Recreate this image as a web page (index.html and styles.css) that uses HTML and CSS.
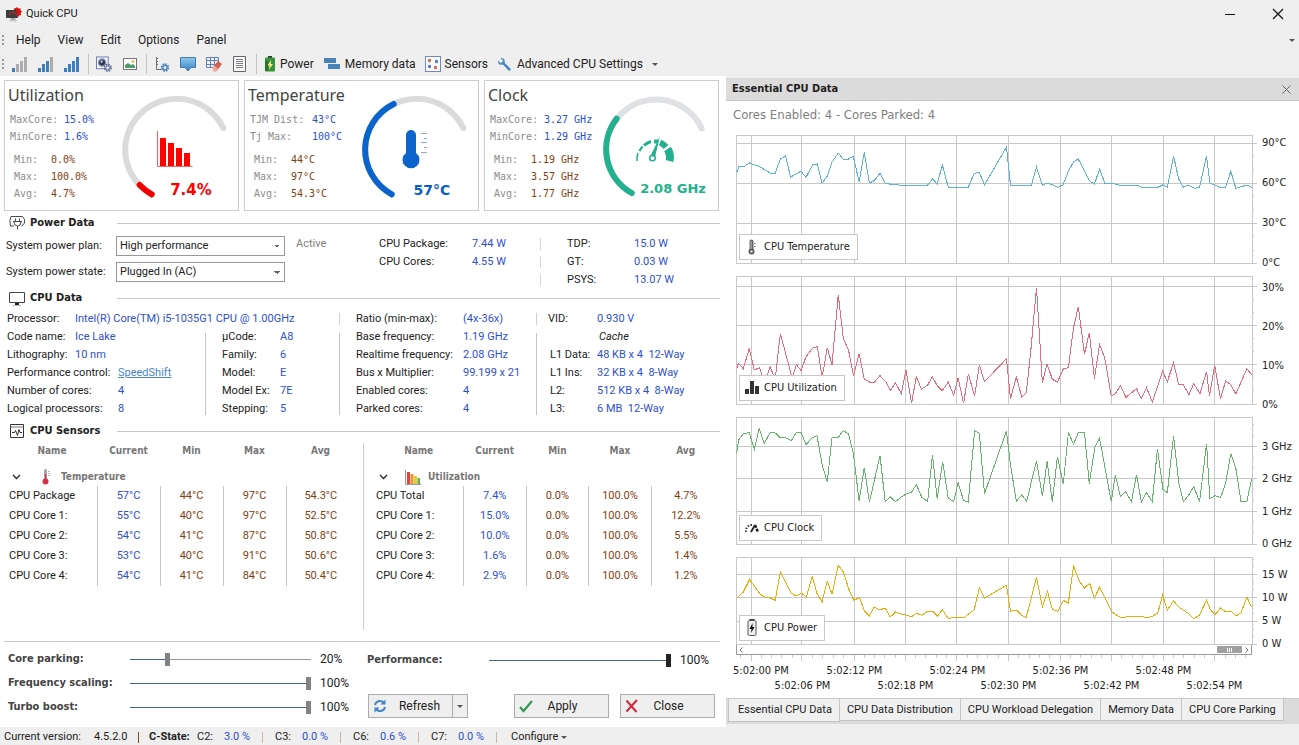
FILE: index.html
```html
<!DOCTYPE html>
<html lang="en">
<head>
<meta charset="utf-8">
<title>Quick CPU</title>
<link rel="stylesheet" href="styles.css">
</head>
<body>
<div class="app">
  <header class="titlebar">
    <svg class="app-icon" width="16" height="15" viewBox="0 0 16 15"><path d="M8 1.500l2-.5 1-1 1.500 1.500 2-.3v2l1.500 1.300-1.300 1.500.5 2-2 .5-1 1.500-5-3z" fill="#d81414"/><path d="M0 3h10l2 8H1a1 1 0 0 1-1-1z" fill="#3d3d40"/><path d="M3.500 8.500a3.500 3.500 0 0 1 7-.3M6.500 8l2-2.500" fill="none" stroke="#a33" stroke-width="1"/><path d="M5 11h4l1 2.500H4z" fill="#a9a9ad"/><path d="M3 14h8" stroke="#c9c9cc"/></svg>
    <span class="title-text">Quick CPU</span>
    <button class="win-btn" aria-label="Minimize"><svg width="12" height="12" viewBox="0 0 12 12"><path d="M1 6.500h10" stroke="#111"/></svg></button>
    <button class="win-btn" aria-label="Close window"><svg width="12" height="12" viewBox="0 0 12 12"><path d="M1 1l10 10M11 1L1 11" stroke="#111" stroke-width="1.200"/></svg></button>
  </header>
  <nav class="menubar">
    <i class="grip"></i>
    <button>Help</button><button>View</button><button>Edit</button><button>Options</button><button>Panel</button>
    <i class="caret end"></i>
  </nav>
  <div class="toolbar">
    <i class="grip"></i>
    <button aria-label="Low"><svg width="16" height="16"><path d="M0 12h3v4H0z" fill="#3f7fc0"/><path d="M4 8h3v8H4zM8 5h3v11H8zM12 1h3v15h-3z" fill="#adadb0"/></svg></button>
    <button aria-label="Medium"><svg width="16" height="16"><path d="M0 12h3v4H0zM4 8h3v8H4zM8 5h3v11H8z" fill="#3f7fc0"/><path d="M12 1h3v15h-3z" fill="#adadb0"/></svg></button>
    <button aria-label="High"><svg width="16" height="16"><path d="M0 12h3v4H0zM4 8h3v8H4zM8 5h3v11H8zM12 1h3v15h-3z" fill="#3f7fc0"/></svg></button>
    <i class="tb-sep"></i>
    <button aria-label="View settings"><svg width="16" height="16" viewBox="0 0 17 17"><rect x=".5" y="1" width="12.500" height="12.500" fill="#f5f7ff" stroke="#6679ad"/><circle cx="6.500" cy="7" r="3.800" fill="#334" stroke="#8090b8" stroke-width="1.500"/><circle cx="6" cy="6" r="1.200" fill="#cfd8f5"/><circle cx="12.500" cy="12.500" r="3.400" fill="none" stroke="#5c6890" stroke-width="1.800" stroke-dasharray="1.700 .97"/><circle cx="12.500" cy="12.500" r="2" fill="#eef" stroke="#5c6890"/></svg></button>
    <button aria-label="Image"><svg width="16" height="16" viewBox="0 0 16 16"><rect x="1.500" y="2.500" width="13" height="11" fill="#fff" stroke="#77777a"/><circle cx="11" cy="5.500" r="1.300" fill="#e5ae3a"/><path d="M3 12V9l3-2 3 2 2-1 2 2v2z" fill="#4d9a6b"/></svg></button>
    <i class="tb-sep"></i>
    <button aria-label="Axis settings"><svg width="16" height="16" viewBox="0 0 16 16"><path d="M2.500 1v12.500H7M2 2.500h2M2 5.500h2M2 8.500h2" fill="none" stroke="#707074"/><circle cx="11" cy="11.500" r="3.300" fill="none" stroke="#4a85c0" stroke-width="2" stroke-dasharray="1.600 .95"/><circle cx="11" cy="11.500" r="2.200" fill="none" stroke="#4a85c0" stroke-width="1.300"/></svg></button>
    <button aria-label="Comment"><svg width="16" height="16" viewBox="0 0 16 16"><defs><linearGradient id="cm" x2="0" y2="1"><stop stop-color="#8fc7ee"/><stop offset="1" stop-color="#3a83c2"/></linearGradient></defs><path d="M.5 1.500h15v10h-4.500l-3 3.500-3-3.500H.5z" fill="url(#cm)" stroke="#3f7bb0"/></svg></button>
    <button aria-label="Clear grid"><svg width="16" height="16" viewBox="0 0 16 16"><path d="M.5 1.500h12v10H.5zM.5 4.500h12M.5 8.500h12M4.500 1.500v10M8.500 1.500v10" fill="#eef3ff" stroke="#637fbb"/><path d="M7 11l5-6 4 3-5 6.500-3 .5z" fill="#d2604a"/><path d="M6 12l2-2.500 4 3L10 15.500H7.500z" fill="#f0a99a"/></svg></button>
    <button aria-label="Report"><svg width="16" height="16" viewBox="0 0 16 16"><path d="M1.500.5h12v15h-12z" fill="#fafafa" stroke="#66666a"/><path d="M4 3.500h7M4 5.500h7M4 7.500h7M4 9.500h7M4 11.500h7" stroke="#808084"/></svg></button>
    <i class="tb-sep"></i>
    <button class="labelled b-power"><svg width="12" height="16" viewBox="0 0 12 16"><path d="M4 0h4v2H4z" fill="#333"/><rect x="1" y="1.500" width="10" height="14" rx="1" fill="#39933a"/><path d="M1 5h3v10H1z" fill="#287528"/><path d="M7 4L3.500 9.500h2L5 13.500 9 8H6.800z" fill="#ffe680"/></svg>Power</button>
    <button class="labelled b-mem"><svg width="17" height="12" viewBox="0 0 17 12"><path d="M0 0h12v5H0zM4 6h12v5H4z" fill="#4a82b8"/></svg>Memory data</button>
    <button class="labelled b-sens"><svg width="16" height="16" viewBox="0 0 16 16"><rect x=".5" y=".5" width="15" height="15" fill="#fbfbff" stroke="#7088bd"/><g fill="none" stroke-width="1.300"><circle cx="4.500" cy="4.500" r="1" stroke="#b36a4a"/><circle cx="11.500" cy="5.500" r="1" stroke="#4a78c0"/><circle cx="4.500" cy="10.500" r="1" stroke="#4a78c0"/><circle cx="10.500" cy="11.500" r="1" stroke="#b36a4a"/></g></svg>Sensors</button>
    <button class="labelled b-adv"><svg width="13" height="13" viewBox="0 0 13 13"><path d="M2.500 0L5 2.400 4.200 4.300 2.400 5 0 2.500C-.3 6 2 7.300 4.800 6.600L10.500 12.500c1.500 1 3-.8 2-2L6.700 5C7.500 1.800 5.500-.4 2.500 0z" fill="#4f87c3"/></svg>Advanced CPU Settings<i class="caret"></i></button>
  </div>

  <main class="content">
    <section class="left">
      <div class="cards">
        <article class="card">
          <div class="card-text">
            <h2>Utilization</h2>
            <dl class="pair top"><dt>MaxCore:</dt><dd>15.0%</dd><dt>MinCore:</dt><dd>1.6%</dd></dl>
            <dl class="pair low"><dt>Min:</dt><dd>0.0%</dd><dt>Max:</dt><dd>100.0%</dd><dt>Avg:</dt><dd>4.7%</dd></dl>
          </div>
          <svg class="gauge" width="110" height="116" viewBox="0 0 110 116">
            <path class="arc" d="M31.700 104.300A51.500 51 0 1 1 103.300 38" stroke="#dbdbdb"/>
            <path class="arc" d="M31.700 104.300Q25 100.500 19.700 95" stroke="#f00000"/>
            <path d="M37.500 41v35.500h35" fill="none" stroke="#ff5a5a"/><path d="M40 48h6v28h-6zM48 53h6v23h-6zM56 58h6v18h-6zM64 63h6v13h-6z" fill="#f00"/>
            <text x="71" y="105" font-size="15" fill="#f00">7.4%</text>
          </svg>
        </article>
        <article class="card">
          <div class="card-text">
            <h2>Temperature</h2>
            <dl class="pair top wide"><dt>TJM Dist:</dt><dd>43°C</dd><dt>Tj Max:</dt><dd>100°C</dd></dl>
            <dl class="pair low"><dt>Min:</dt><dd>44°C</dd><dt>Max:</dt><dd>97°C</dd><dt>Avg:</dt><dd>54.3°C</dd></dl>
          </div>
          <svg class="gauge" width="110" height="116" viewBox="0 0 110 116">
            <path class="arc" d="M31.700 104.300A51.500 51 0 1 1 103.300 38" stroke="#dbdbdb"/>
            <path class="arc" d="M31.700 104.300A51.500 51 0 0 1 33.700 14" stroke="#0a64cc"/>
            <path d="M46 45a5 5 0 0 1 10 0v18a8.500 8.500 0 1 1-10 0z" fill="#0a64cc"/><path d="M61 43.500h6M64 48.500h3M61 52.500h6M64 57.500h3M61 62.500h6" stroke="#90a4e0"/>
            <text x="72" y="105" font-size="14" fill="#0a5fc4">57°C</text>
          </svg>
        </article>
        <article class="card">
          <div class="card-text">
            <h2>Clock</h2>
            <dl class="pair top"><dt>MaxCore:</dt><dd>3.27 GHz</dd><dt>MinCore:</dt><dd>1.29 GHz</dd></dl>
            <dl class="pair low"><dt>Min:</dt><dd>1.19 GHz</dd><dt>Max:</dt><dd>3.57 GHz</dd><dt>Avg:</dt><dd>1.77 GHz</dd></dl>
          </div>
          <svg class="gauge" width="110" height="116" viewBox="0 0 110 116">
            <path class="arc" d="M31.700 103A50 50 0 1 1 101.700 38.500" stroke="#e0e1e4"/>
            <path class="arc" d="M31.700 103A50 50 0 0 1 16.700 28.700" stroke="#23b08e"/>
            <g fill="none" stroke="#23b08e"><path d="M37 71a18 18 0 0 1 1-8" stroke-width="1.500"/><path d="M39.500 61a19 19 0 0 1 3-4.500" stroke-width="2"/><path d="M44 55.500a18 18 0 0 1 7-4" stroke-width="3"/><path d="M54 51.500h4" stroke-width="4"/><path d="M60 52.500a16 16 0 0 1 6 4.500" stroke-width="6"/><path d="M67.500 59a15 15 0 0 1 2 12" stroke-width="8"/><circle cx="52.500" cy="68" r="2.800" stroke-width="1.500"/></g><path d="M50.500 66L60 46l-5 21z" fill="#23b08e"/>
            <text x="73" y="103" font-size="13" fill="#23b08e">2.08 GHz</text>
          </svg>
        </article>
      </div>

      <h3 class="section"><svg width="17" height="16" viewBox="0 0 17 16"><path d="M5 11H1.500Q0 5 2 1.500h11.500Q16.500 4 15.500 8l-3 3.500M6.500 3.500v3M10.500 3.500v3M4 6.500h9M5 7q0 4 3.500 4T12 7M8.500 11v3.500" fill="none" stroke="#4a4a4a"/></svg>Power Data</h3>
      <div class="power">
        <div class="plan">
          <label for="plan">System power plan:</label><select id="plan"><option>High performance</option></select>
          <label for="state">System power state:</label><select id="state"><option>Plugged In (AC)</option></select>
        </div>
        <span class="active-tag">Active</span>
        <dl class="pw a"><dt>CPU Package:</dt><dd>7.44 W</dd><dt>CPU Cores:</dt><dd>4.55 W</dd></dl>
        <div class="ticks"><i></i><i></i><i></i></div>
        <dl class="pw b"><dt>TDP:</dt><dd>15.0 W</dd><dt>GT:</dt><dd>0.03 W</dd><dt>PSYS:</dt><dd>13.07 W</dd></dl>
      </div>

      <h3 class="section"><svg width="17" height="15" viewBox="0 0 17 15"><path d="M.5 1.500h15v10H.5z" fill="#fff" stroke="#444"/><path d="M6 12h4v2H6z" fill="#222"/><path d="M4 14.500h8" stroke="#bbb"/></svg>CPU Data</h3>
      <div class="cpu">
        <dl class="kv first c1"><dt>Processor:</dt><dd>Intel(R) Core(TM) i5-1035G1 CPU @ 1.00GHz</dd></dl>
        <dl class="kv c3 tick"><dt>Ratio (min-max):</dt><dd>(4x-36x)</dd></dl>
        <dl class="kv c4 tick"><dt>VID:</dt><dd>0.930 V</dd></dl>
        <div class="names">
          <dl class="kv short"><dt>Code name:</dt><dd>Ice Lake</dd><dt>Lithography:</dt><dd>10 nm</dd></dl>
          <dl class="kv long"><dt>Performance control:</dt><dd><a href="#">SpeedShift</a></dd><dt>Number of cores:</dt><dd>4</dd><dt>Logical processors:</dt><dd>8</dd></dl>
        </div>
        <dl class="kv c2 rule"><dt>µCode:</dt><dd>A8</dd><dt>Family:</dt><dd>6</dd><dt>Model:</dt><dd>E</dd><dt>Model Ex:</dt><dd>7E</dd><dt>Stepping:</dt><dd>5</dd></dl>
        <dl class="kv c3 rule"><dt>Base frequency:</dt><dd>1.19 GHz</dd><dt>Realtime frequency:</dt><dd>2.08 GHz</dd><dt>Bus x Multiplier:</dt><dd>99.199 x 21</dd><dt>Enabled cores:</dt><dd>4</dd><dt>Parked cores:</dt><dd>4</dd></dl>
        <dl class="kv c4 rule cache"><dt></dt><dd class="cap">Cache</dd><dt>L1 Data:</dt><dd>48 KB x 4&nbsp; 12-Way</dd><dt>L1 Ins:</dt><dd>32 KB x 4&nbsp; 8-Way</dd><dt>L2:</dt><dd>512 KB x 4&nbsp; 8-Way</dd><dt>L3:</dt><dd>6 MB&nbsp; 12-Way</dd></dl>
      </div>

      <h3 class="section"><svg width="16" height="15" viewBox="0 0 16 15"><path d="M1.500.5h13v13h-13z" fill="#fff" stroke="#333"/><path d="M1.500 3h13" stroke="#777"/><path d="M3 8.500h2.500l1-2 2 5 1.500-6 1 3h2" fill="none" stroke="#333"/></svg>CPU Sensors</h3>
      <div class="sensors">
        <table>
          <thead><tr><th>Name</th><th>Current</th><th>Min</th><th>Max</th><th>Avg</th></tr>
          <tr class="group"><th colspan="5"><div><svg width="9" height="6" viewBox="0 0 9 6"><path d="M1 1l3.500 3.500L8 1" fill="none" stroke="#222" stroke-width="1.300"/></svg><svg class="g-icon" width="16" height="16" viewBox="0 0 16 16"><path d="M6 1.500a1.500 1.500 0 0 1 3 0V10H6z" fill="#aaa3ad"/><path d="M7 5h1.200v7H7z" fill="#d82f45"/><circle cx="7.500" cy="12.500" r="3" fill="#d82f45"/><path d="M10 2.500h2M10 4.500h2M10 6.500h2" stroke="#bbb"/></svg>Temperature</div></th></tr></thead>
          <tbody>
          <tr><td>CPU Package</td><td>57°C</td><td>44°C</td><td>97°C</td><td>54.3°C</td></tr>
          <tr><td>CPU Core 1:</td><td>55°C</td><td>40°C</td><td>97°C</td><td>52.5°C</td></tr>
          <tr><td>CPU Core 2:</td><td>54°C</td><td>41°C</td><td>87°C</td><td>50.8°C</td></tr>
          <tr><td>CPU Core 3:</td><td>53°C</td><td>40°C</td><td>91°C</td><td>50.6°C</td></tr>
          <tr><td>CPU Core 4:</td><td>54°C</td><td>41°C</td><td>84°C</td><td>50.4°C</td></tr>
          </tbody>
        </table>
        <table>
          <thead><tr><th>Name</th><th>Current</th><th>Min</th><th>Max</th><th>Avg</th></tr>
          <tr class="group"><th colspan="5"><div><svg width="9" height="6" viewBox="0 0 9 6"><path d="M1 1l3.500 3.500L8 1" fill="none" stroke="#222" stroke-width="1.300"/></svg><svg class="g-icon" width="16" height="16" viewBox="0 0 16 16"><path d="M.5 1v14.500H16" fill="none" stroke="#999"/><path d="M2 3h3v12H2z" fill="#e0463c"/><path d="M5.500 5h3v10h-3z" fill="#ef9430"/><path d="M9 7h3v8H9z" fill="#e6cb35"/><path d="M12.500 9h2.500v6h-2.500z" fill="#63ac4b"/></svg>Utilization</div></th></tr></thead>
          <tbody>
          <tr><td>CPU Total</td><td>7.4%</td><td>0.0%</td><td>100.0%</td><td>4.7%</td></tr>
          <tr><td>CPU Core 1:</td><td>15.0%</td><td>0.0%</td><td>100.0%</td><td>12.2%</td></tr>
          <tr><td>CPU Core 2:</td><td>10.0%</td><td>0.0%</td><td>100.0%</td><td>5.5%</td></tr>
          <tr><td>CPU Core 3:</td><td>1.6%</td><td>0.0%</td><td>100.0%</td><td>1.4%</td></tr>
          <tr><td>CPU Core 4:</td><td>2.9%</td><td>0.0%</td><td>100.0%</td><td>1.2%</td></tr>
          </tbody>
        </table>
      </div>

      <div class="controls">
        <div class="sliders">
          <label for="park">Core parking:</label><input id="park" type="range" value="20" style="--fill:20%"><output for="park">20%</output>
          <label for="freq">Frequency scaling:</label><input id="freq" type="range" value="100" style="--fill:100%"><output for="freq">100%</output>
          <label for="turbo">Turbo boost:</label><input id="turbo" type="range" value="100" style="--fill:100%"><output for="turbo">100%</output>
        </div>
        <div class="right-controls">
          <div class="perf"><label for="perf">Performance:</label><input class="dark" id="perf" type="range" value="100" style="--fill:100%"><output for="perf">100%</output></div>
          <div class="buttons">
            <div class="split"><button class="btn"><svg width="14" height="14" viewBox="0 0 14 14"><path d="M2 6a5 5 0 0 1 8.500-2.500M12 8a5 5 0 0 1-8.500 2.500" fill="none" stroke="#4583c4" stroke-width="2"/><path d="M12.500.5v5h-5zM1.500 13.500v-5h5z" fill="#4583c4"/></svg><span>Refresh</span></button><button class="drop" aria-label="Refresh options"><i class="caret"></i></button></div>
            <button class="btn apply"><svg width="14" height="14" viewBox="0 0 14 14"><path d="M1 8l3.500 4L13 2" fill="none" stroke="#319a4f" stroke-width="2.200"/></svg><span>Apply</span></button>
            <button class="btn close"><svg width="14" height="14" viewBox="0 0 14 14"><path d="M1.500 1.500l10 11.500M12 1L1.500 12.500" fill="none" stroke="#d2283c" stroke-width="2"/></svg><span>Close</span></button>
          </div>
        </div>
      </div>
    </section>

    <section class="panel">
      <header class="panel-head"><h2>Essential CPU Data</h2><button aria-label="Close panel"><svg width="9" height="9" viewBox="0 0 9 9"><path d="M.5.5l8 8M8.500.5l-8 8" stroke="#666"/></svg></button></header>
      <p class="cores">Cores Enabled: 4 - Cores Parked: 4</p>
      <div class="charts">
        <div class="chart temp">
          <div class="plot"><svg viewBox="31 178 1408 384" preserveAspectRatio="none"><g class="grid"><path d="M72 178V562M211 178V562M353 178V562M493 178V562M634 178V562M774 178V562M916 178V562M1055 178V562M1197 178V562M1337 178V562M31 202H1452M31 322H1452M31 442H1452M31 562H1452M1439 241h6M1439 281h6M1439 361h6M1439 401h6M1439 481h6M1439 523h6M31 178H1439V562H31z"/></g>
          <polyline stroke="#5db3cb" points="33,290 38,274 52,273 68,262 95,273 124,292 138,292 152,250 166,241 180,304 208,287 222,305 240,268 253,265 266,322 280,302 293,260 310,232 323,250 338,250 351,242 367,318 381,230 395,322 408,315 424,293 438,322 450,325 473,325 476,328 554,328 567,310 580,325 594,268 610,334 665,334 681,293 695,290 709,328 769,214 780,328 837,328 851,274 867,329 880,322 895,328 908,335 923,328 938,287 952,258 965,250 995,315 1009,325 1023,281 1037,322 1055,322 1075,328 1126,328 1137,334 1184,334 1195,328 1208,334 1225,241 1239,310 1252,335 1265,328 1282,338 1296,334 1315,241 1324,322 1350,334 1367,334 1381,287 1395,338 1425,328 1438,335"/></svg>
          <div class="legend"><svg width="18" height="16" viewBox="0 0 18 16"><path d="M4.500 2.500a2 2 0 0 1 4 0v8.500h-4z" fill="#666"/><circle cx="6.500" cy="12.500" r="3" fill="#555"/><circle cx="6.500" cy="12.500" r="1.300" fill="#ddd"/><path d="M6 2v8" stroke="#bbb"/><path d="M9 4.500h1.500M9 7.500h1.500" stroke="#777"/></svg>CPU Temperature</div></div>
          <div class="axis"><span>90°C</span><span>60°C</span><span>30°C</span><span>0°C</span></div>
        </div>
        <div class="chart util">
          <div class="plot"><svg viewBox="31 20 1408 384" preserveAspectRatio="none"><g class="grid"><path d="M72 20V404M211 20V404M353 20V404M493 20V404M634 20V404M774 20V404M916 20V404M1055 20V404M1197 20V404M1337 20V404M31 52H1452M31 169H1452M31 286H1452M31 404H1452M1439 91h6M1439 130h6M1439 208h6M1439 247h6M1439 325h6M1439 364h6M31 20H1439V404H31z"/></g>
          <polyline stroke="#e56a7c" points="33,297 38,283 51,298 67,238 81,302 95,295 109,340 124,292 138,330 152,193 184,325 196,287 209,304 222,262 240,236 253,232 266,325 280,235 293,286 310,77 324,208 338,242 352,320 367,253 381,329 395,338 409,338 424,319 440,338 452,364 466,340 482,373 495,302 510,402 523,322 537,360 554,347 567,322 580,349 594,364 610,338 625,378 637,325 652,402 665,314 682,381 695,287 709,337 769,268 780,388 796,323 811,384 823,370 835,250 851,55 867,340 880,284 894,330 908,338 924,299 938,295 952,175 965,112 982,255 995,190 1009,328 1023,226 1037,265 1055,380 1066,373 1080,349 1095,384 1124,358 1137,388 1151,355 1167,398 1195,305 1208,337 1225,280 1239,346 1252,347 1267,376 1280,343 1297,373 1315,307 1323,380 1337,287 1353,388 1367,335 1381,346 1395,374 1425,298 1438,316"/></svg>
          <div class="legend"><svg width="18" height="16" viewBox="0 0 18 16"><path d="M0 9h4v5H0zM5 1h4v13H5zM10 6h4v8h-4z" fill="#333"/></svg>CPU Utilization</div></div>
          <div class="axis"><span>30%</span><span>20%</span><span>10%</span><span>0%</span></div>
        </div>
        <div class="chart clock">
          <div class="plot"><svg viewBox="31 443 1408 381" preserveAspectRatio="none"><g class="grid"><path d="M72 443V824M211 443V824M353 443V824M493 443V824M634 443V824M774 443V824M916 443V824M1055 443V824M1197 443V824M1337 443V824M31 532H1452M31 628H1452M31 726H1452M31 824H1452M1439 466h6M1439 500h6M1439 565h6M1439 595h6M1439 661h6M1439 694h6M1439 757h6M1439 790h6M31 443H1439V824H31z"/></g>
          <polyline stroke="#67b36d" points="33,552 38,512 51,493 67,490 81,540 94,478 108,523 124,490 138,491 152,505 168,506 182,514 195,490 209,490 222,526 238,506 252,499 266,586 280,637 293,506 310,505 323,484 338,493 351,550 367,695 381,595 395,698 424,559 438,697 452,682 466,697 482,683 495,674 510,669 523,646 538,684 554,697 567,556 580,688 595,577 610,686 625,697 637,640 652,694 665,698 682,484 695,491 709,673 769,485 780,586 796,696 811,676 824,697 851,574 867,681 880,574 894,698 908,562 924,644 938,490 952,524 965,490 982,490 995,643 1010,535 1023,506 1055,697 1066,616 1080,682 1094,667 1110,697 1124,616 1137,698 1151,670 1167,697 1181,538 1196,660 1208,670 1225,499 1239,640 1252,697 1267,676 1280,652 1296,697 1315,523 1324,688 1338,679 1353,685 1367,643 1381,553 1395,598 1409,697 1425,697 1438,629"/></svg>
          <div class="legend"><svg width="18" height="16" viewBox="0 0 18 16"><path d="M1 12a6 6 0 0 1 7-7" fill="none" stroke="#333" stroke-width="2" stroke-dasharray="1.500 1.500"/><path d="M10 5l3 7" stroke="#222" stroke-width="2.500" stroke-dasharray="3 1"/><path d="M6 12l4-7" stroke="#222" stroke-width="1.800"/></svg>CPU Clock</div></div>
          <div class="axis"><span>3 GHz</span><span>2 GHz</span><span>1 GHz</span><span>0 GHz</span></div>
        </div>
        <div class="chart watt">
          <div class="plot"><svg viewBox="31 37 1408 261" preserveAspectRatio="none"><g class="grid"><path d="M72 37V298M211 37V298M353 37V298M493 37V298M634 37V298M774 37V298M916 37V298M1055 37V298M1197 37V298M1337 37V298M31 88H1452M31 157H1452M31 229H1452M31 298H1452M1439 43h6M1439 65h6M1439 112h6M1439 133h6M1439 181h6M1439 205h6M1439 253h6M1439 274h6M31 37H1439V298H31z"/></g>
          <polyline stroke="#e9ab05" points="33,161 51,142 68,104 97,149 110,157 125,160 138,167 152,82 181,145 195,154 210,146 223,157 239,95 252,146 266,172 280,110 293,149 310,62 324,82 338,131 352,166 368,160 382,200 395,214 408,187 424,196 438,190 452,217 466,202 482,208 495,211 509,217 523,205 537,212 555,199 567,199 581,214 594,196 612,223 625,217 652,220 665,208 681,196 695,130 709,160 769,122 780,200 797,196 811,213 823,218 851,98 867,187 881,140 894,194 909,200 924,167 938,175 952,65 968,110 982,130 996,116 1009,160 1023,128 1057,202 1078,217 1095,217 1110,214 1138,214 1152,220 1167,215 1182,205 1195,151 1208,196 1225,169 1239,187 1265,206 1280,223 1296,211 1315,166 1325,194 1338,211 1353,190 1368,202 1381,199 1395,214 1409,205 1425,157 1438,188"/></svg>
          <div class="legend"><svg width="18" height="18" viewBox="0 0 18 18"><path d="M4.500 .5h5" stroke="#333" stroke-width="2"/><rect x="3" y="1.500" width="8" height="15" rx="1.500" fill="#eee" stroke="#555"/><path d="M7.500 4L4.500 10h2l-.5 4L9.500 8h-2z" fill="#111"/></svg>CPU Power</div></div>
          <div class="axis"><span>15 W</span><span>10 W</span><span>5 W</span><span>0 W</span></div>
        </div>
        <div class="time">
          <div class="scroll"><svg width="4" height="6" viewBox="0 0 4 6"><path d="M3.500.5L1 3l2.500 2.500" fill="none" stroke="#777"/></svg><i class="thumb"></i><svg width="4" height="6" viewBox="0 0 4 6"><path d="M.5.5L3 3 .5 5.500" fill="none" stroke="#777"/></svg></div>
          <svg class="time-ticks" viewBox="31 0 1408 6" preserveAspectRatio="none"><g class="grid"><path d="M72 0V6M211 0V6M353 0V6M493 0V6M634 0V6M774 0V6M916 0V6M1055 0V6M1197 0V6M1337 0V6M44 0V3M100 0V3M128 0V3M156 0V3M184 0V3M240 0V3M268 0V3M297 0V3M325 0V3M381 0V3M409 0V3M437 0V3M465 0V3M521 0V3M549 0V3M578 0V3M606 0V3M662 0V3M690 0V3M718 0V3M746 0V3M803 0V3M831 0V3M859 0V3M887 0V3M944 0V3M972 0V3M1000 0V3M1028 0V3M1084 0V3M1112 0V3M1141 0V3M1169 0V3M1225 0V3M1253 0V3M1281 0V3M1309 0V3M1366 0V3M1394 0V3M1422 0V3"/></g></svg>
          <div class="times odd"><span>5:02:00 PM</span><span>5:02:12 PM</span><span>5:02:24 PM</span><span>5:02:36 PM</span><span>5:02:48 PM</span></div>
          <div class="times even"><span>5:02:06 PM</span><span>5:02:18 PM</span><span>5:02:30 PM</span><span>5:02:42 PM</span><span>5:02:54 PM</span></div>
        </div>
      </div>
      <div class="tabs"><button class="on">Essential CPU Data</button><button>CPU Data Distribution</button><button>CPU Workload Delegation</button><button>Memory Data</button><button>CPU Core Parking</button></div>
    </section>
  </main>

  <footer class="status">
    <span class="ver">Current version:</span><span class="num">4.5.2.0</span><i class="bar dark"></i><b>C-State:</b>
    <span class="cs">C2:</span><span class="cv">3.0 %</span><i class="bar"></i>
    <span class="cs">C3:</span><span class="cv">0.0 %</span><i class="bar"></i>
    <span class="cs">C6:</span><span class="cv">0.6 %</span><i class="bar"></i>
    <span class="cs">C7:</span><span class="cv">0.0 %</span><i class="bar"></i>
    <button>Configure<i class="caret"></i></button>
  </footer>
</div>
</body>
</html>
```
FILE: styles.css
```css
* { box-sizing: border-box; }
body { margin: 0; background: #efefef; color: #222; font: 11px/18px Roboto, "Liberation Sans", sans-serif; }
h2, h3, p, dl, dd { margin: 0; }
i { font-style: normal; }
svg { display: block; flex: none; }
button { margin: 0; padding: 0; border: 0; background: none; color: inherit; font: inherit; }
.app { display: flex; flex-direction: column; min-height: 100vh; }

.caret { flex: none; width: 0; height: 0; border: 3px solid transparent; border-top-color: #555; border-bottom: 0; }
.grip { flex: none; width: 2px; height: 11px; background: repeating-linear-gradient(#999 0 2px, transparent 2px 4px); margin-left: 2px; }

.titlebar { display: flex; align-items: center; height: 28px; padding: 0 15px 0 6px; }
.title-text { margin-left: 4px; flex: 1; }
.win-btn { margin-left: 36px; }
.menubar, .toolbar { display: flex; align-items: center; height: 24px; font-size: 12px; }
.menubar button { margin-right: 17px; }
.menubar .grip { margin-right: 12px; }
.menubar .end { margin-left: auto; margin-right: 4px; }
.toolbar .grip { margin-right: 8px; }
.toolbar button { margin-right: 10px; display: flex; align-items: center; }
.tb-sep { width: 1px; height: 20px; background: #c4c4c4; margin: 0 7px 0 -2px; }
.toolbar .labelled { gap: 4px; }
.toolbar .b-mem { margin-right: 9px; }
.toolbar .b-adv { gap: 6px; }
.toolbar .b-adv .caret { margin-left: 3px; }

.content { display: grid; grid-template-columns: minmax(0, 726fr) minmax(0, 573fr); flex: 1; }
.left { display: flex; flex-direction: column; background: #fff; padding: 4px 6px 0 4px; }
.cards { display: flex; gap: 5px; margin-right: 1px; }
.card { flex: 1; display: flex; height: 131px; border: 1px solid #ccc; }
.card-text { width: 115px; padding: 5px 0 0 3px; }
.card h2 { font: 400 16px/19px "Noto Sans", sans-serif; color: #444; }
.pair { display: grid; font: 10px/17px "DejaVu Sans Mono", monospace; color: #8c8c8c; white-space: nowrap; }
.pair.top { grid-template-columns: 54px 1fr; padding: 6px 0 0 2px; }
.pair.wide { grid-template-columns: 62px 1fr; }
.pair.low { grid-template-columns: 37px 1fr; padding: 6px 0 0 6px; }
.pair.top dd { color: #2b50cc; }
.pair.low dd { color: #84410f; }
.gauge { margin-top: 9px; }
.gauge .arc { fill: none; stroke-width: 6; stroke-linecap: round; }
.gauge text { font-family: "DejaVu Sans", sans-serif; font-weight: 700; text-anchor: middle; }

.section { display: grid; grid-template-columns: 21px 87px 1fr; align-items: center; height: 24px; padding-left: 5px; font: 700 11px/18px "DejaVu Sans Condensed", "DejaVu Sans", sans-serif; }
.section::after { content: ""; height: 1px; background: #c8c8c8; }
.power { display: flex; height: 51px; }
.plan { flex: none; display: grid; grid-template-columns: 110px 169px; row-gap: 6px; align-content: start; padding: 1px 0 0 2px; line-height: 20px; }
.plan select { appearance: none; height: 20px; border: 1px solid #999; border-radius: 0; padding: 0 3px; font: inherit; line-height: 18px; color: #222; background-color: #fff; background-repeat: no-repeat; background-image: linear-gradient(45deg, transparent 50%, #666 0), linear-gradient(-45deg, transparent 50%, #666 0); background-size: 3px 3px; background-position: right 7px center, right 4px center; }
.active-tag { flex: none; width: 94px; padding-left: 11px; color: #808080; }
.pw { display: grid; align-content: start; }
.pw.a { grid-template-columns: 93px 68px; }
.pw.b { grid-template-columns: 67px 1fr; padding-left: 26px; }
.power dd, .cpu dd { color: #2f4fd0; }
.ticks { width: 1px; }
.ticks i { display: block; height: 12px; margin: 3px 0 6px; background: #ddd0d8; }

.cpu { display: grid; grid-template-columns: 201px 134px 197px 1fr; height: 109px; align-content: start; white-space: nowrap; }
.kv { display: grid; align-content: start; }
.first { grid-column: span 2; grid-template-columns: 68px 1fr; padding-left: 3px; }
.names { padding-left: 3px; }
.kv.short { grid-template-columns: 68px 1fr; }
.kv.long { grid-template-columns: 111px 1fr; }
.kv.c2 { grid-template-columns: 58px 1fr; padding-left: 17px; }
.kv.c3 { grid-template-columns: 107px 1fr; padding-left: 17px; }
.kv.c4 { grid-template-columns: 49px 1fr; padding-left: 12px; }
.kv.cache { grid-template-columns: 47px 1fr; padding-left: 14px; }
.rule { background: linear-gradient(#c4c4c4, #c4c4c4) no-repeat 0 5px / 1px 82px; }
.tick { background: linear-gradient(#d8ccd2, #d8ccd2) no-repeat 0 3px / 1px 12px; }
.cpu dd.cap { color: #222; font-style: italic; padding-left: 2px; }
.cpu a { color: #4a86c8; }

.sensors { display: grid; grid-template-columns: 359px 1fr; height: 187px; margin-bottom: 11px; }
.sensors table { border-spacing: 0; border-collapse: collapse; display: block; height: 100%; padding-top: 1px; }
.sensors table + table { border-left: 1px solid #ccc; padding-left: 7px; }
.sensors th { width: 63px; padding: 0; height: 14px; font: 700 10px/14px "DejaVu Sans Condensed", "DejaVu Sans", sans-serif; color: #777; }
.sensors th:first-child { width: 93px; padding-left: 3px; }
.sensors th:last-child { width: 69px; }
.sensors .group th { height: 24px; padding: 10px 0 0 8px; width: auto; }
.group div { display: flex; align-items: center; height: 18px; }
.g-icon { margin: 0 7px 0 17px; }
.sensors td { height: 20px; padding: 0; text-align: center; color: #84410f; border-left: 1px solid #c4c4c4; line-height: 20px; }
.sensors td:first-child { text-align: left; padding-left: 5px; color: #222; border: 0; }
.sensors td:nth-child(2) { color: #2f4fd0; }

.controls { display: flex; justify-content: space-between; border-top: 1px solid #ccc; padding: 5px 5px 0 4px; }
.sliders { display: grid; grid-template-columns: 122px 181px 42px; grid-auto-rows: 24px; align-items: center; }
.controls label { font: 700 11px/18px "DejaVu Sans Condensed", "DejaVu Sans", sans-serif; color: #444; }
.controls output { padding-left: 9px; font: 12px/18px Roboto, sans-serif; }
input[type=range] { appearance: none; width: 100%; height: 14px; margin: 0; background: none; }
input[type=range]::-webkit-slider-runnable-track { height: 1px; background: linear-gradient(#44648f, #44648f) no-repeat 0 0 / var(--fill) 100% #999; }
input[type=range]::-webkit-slider-thumb { appearance: none; width: 5px; height: 13px; margin-top: -6px; background: #828282; border: 0; border-radius: 0; }
input.dark::-webkit-slider-thumb { background: #222; }
.right-controls { width: 348px; }
.perf { display: grid; grid-template-columns: 122px 182px 44px; align-items: center; height: 26px; }
.buttons { display: flex; margin: 21px 0 0 1px; height: 24px; }
.btn { display: flex; align-items: center; width: 95px; height: 24px; border: 1px solid #acacac; background: #efefef; padding-left: 4px; }
.btn span { flex: 1; text-align: center; padding-right: 16px; font-size: 12px; }
.split { display: flex; width: 100px; margin-right: 46px; }
.split .btn { width: 84px; border-right: 0; }
.split .btn span { padding-right: 0; }
.drop { width: 16px; border: 1px solid #acacac; background: #efefef; display: grid; place-items: center; }
.btn.close { margin-left: 11px; }

.panel { display: flex; flex-direction: column; background: #fff; margin: 2px 0 3px; font-family: "DejaVu Sans Condensed", "DejaVu Sans", sans-serif; }
.panel-head { display: flex; align-items: center; justify-content: space-between; height: 23px; padding: 0 8px 0 6px; background: #dbdbdb; border-bottom: 1px solid #c8c8c8; }
.panel-head h2 { font-size: 11px; line-height: 18px; }
.cores { padding: 4px 7px 0; font-size: 13px; line-height: 20px; color: #808080; }
.charts { padding: 10px 0 0 10px; }
.chart { display: grid; grid-template: minmax(0, 1fr) / 1fr 47px; height: 128px; margin-bottom: 13px; }
.plot { position: relative; min-height: 0; }
.plot > svg { width: 100%; height: 100%; overflow: visible; }
.grid path { fill: none; stroke: #c8c8c8; stroke-width: 1px; vector-effect: non-scaling-stroke; shape-rendering: crispEdges; }
polyline { fill: none; stroke-width: 1px; vector-effect: non-scaling-stroke; shape-rendering: crispEdges; }
.legend { position: absolute; left: 3px; bottom: 3px; display: flex; align-items: center; gap: 1px; height: 26px; padding: 0 7px 0 5px; border: 1px solid #c8c8c8; background: #fff; }
.axis { display: flex; flex-direction: column; align-self: end; padding-left: 10px; height: 160px; margin-bottom: -20px; }
.axis span { flex: 1; display: flex; align-items: center; white-space: nowrap; line-height: 16px; }
.util .axis { height: 156px; margin-bottom: -20px; }
.clock { height: 127px; }
.clock .axis { height: 129px; margin-bottom: -16px; }
.watt { height: 87px; margin-bottom: 0; }
.watt .axis { height: 93px; margin-bottom: -12px; }
.time { margin-right: 47px; }
.scroll { display: flex; align-items: center; height: 11px; border: 1px solid #999; padding: 0 2px; }
.thumb { width: 25px; height: 7px; margin: 0 3px 0 auto; background: repeating-linear-gradient(90deg, #fff 0 1px, transparent 1px 2px) no-repeat center / 5px 4px #a0a0a0; }
.time-ticks { width: 100%; height: 6px; }
.times { display: grid; line-height: 15px; text-align: center; white-space: nowrap; }
.odd { grid-template-columns: 67fr repeat(4, 103fr) 37fr; padding-top: 2px; }
.odd span:first-child { margin-left: -3px; text-align: left; }
.even { grid-template-columns: repeat(4, 103fr) 89fr; padding-left: 15px; }
.even span:last-child { margin-right: -14px; }
.tabs { display: flex; align-items: flex-start; height: 26px; margin-top: auto; padding-left: 2px; background: #dbdbdb; border-top: 1px solid #c8c8c8; font-family: Roboto, sans-serif; }
.tabs button { height: 22px; padding: 0 7px; border: 1px solid #c4c4c4; border-width: 0 1px 1px 0; background: #f0f0f0; white-space: nowrap; }
.tabs .on { height: 23px; padding: 0 7px 0 9px; border-left-width: 1px; }

.status { display: flex; align-items: center; height: 18px; padding: 2px 0 0 4px; white-space: nowrap; }
.status .ver { width: 90px; }
.status .num { width: 44px; }
.status b { width: 58px; padding-left: 10px; }
.bar { width: 1px; height: 11px; background: #c9b7a2; margin-right: 12px; }
.bar.dark { background: #7a4a20; margin-right: 0; }
.cs { width: 27px; }
.cv { width: 38px; color: #2f4fd0; }
.status button { display: flex; align-items: center; gap: 3px; padding-left: 2px; }
```
